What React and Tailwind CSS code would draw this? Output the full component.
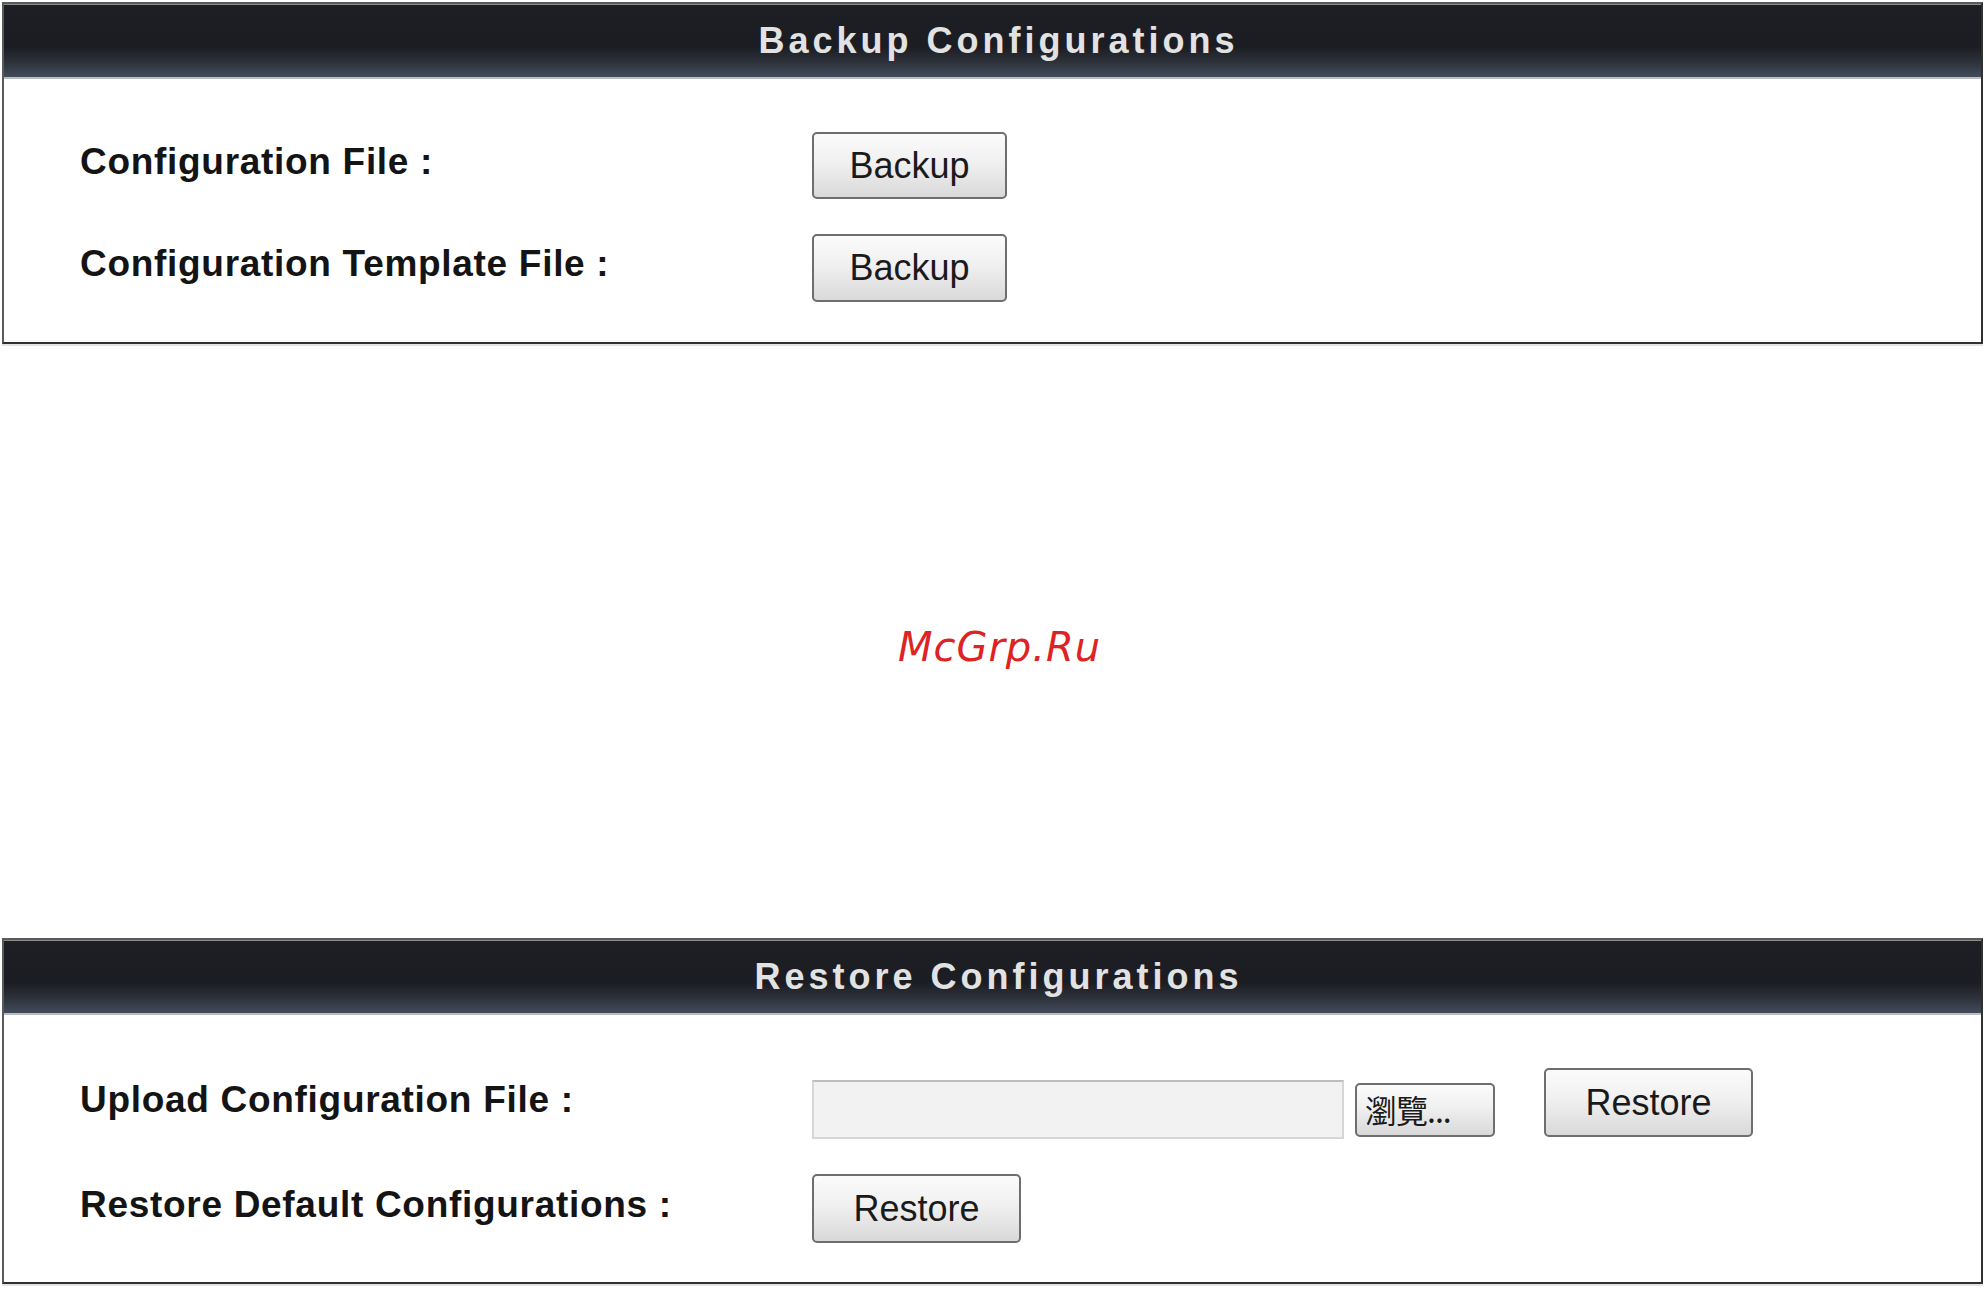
import React from 'react'

const font = { fontFamily: '"Liberation Sans", Arial, sans-serif' }

function Header({ title }) {
  return (
    <div className="h-[75px] flex items-center justify-center pl-[12px] border-t border-[#8c8c8c] border-b-2 border-b-[#b9bcc2] bg-[linear-gradient(to_bottom,#1d1f25_0%,#1b1d23_58%,#2c3038_78%,#434b5c_100%)]">
      <span className="text-[36px] font-bold tracking-[4px] text-[#e2e2e2] -mt-[1px]">{title}</span>
    </div>
  )
}

function Button({ children, className = '' }) {
  return (
    <button
      className={`border-2 border-[#6e6e6e] rounded-[5px] bg-[linear-gradient(to_bottom,#fbfbfb_0%,#f0f0f0_45%,#d9d9d9_100%)] text-[#1a1a1a] leading-none ${className}`}
      style={font}
    >
      {children}
    </button>
  )
}

function Label({ children }) {
  return (
    <div className="w-[808px] shrink-0 pl-[76px] text-[37px] font-bold tracking-[0.7px] text-[#141414] -mt-[8px]">
      {children}
    </div>
  )
}

export default function App() {
  return (
    <div className="w-[1987px] h-[1289px] bg-white pt-[2px] pl-[2px]" style={font}>
      {/* Backup */}
      <div className="w-[1981px] border-2 border-[#5a5a5a] border-r-[#303030] border-b-[#303030] shadow-[0_2px_0_#e4e4e4]">
        <Header title="Backup Configurations" />
        <div className="pt-[53px] pb-[40px] flex flex-col gap-[35px]">
          <div className="flex items-center">
            <Label>Configuration File :</Label>
            <Button className="w-[195px] h-[67px] text-[36px]">Backup</Button>
          </div>
          <div className="flex items-center">
            <Label>Configuration Template File :</Label>
            <Button className="w-[195px] h-[68px] text-[36px]">Backup</Button>
          </div>
        </div>
      </div>

      {/* Watermark */}
      <div className="h-[594px] flex items-center justify-center pl-[10px] pt-[12px]">
        <span className="text-[40px] italic tracking-[1px] text-[#dd2323]" style={{ fontFamily: '"DejaVu Sans", sans-serif' }}>
          McGrp.Ru
        </span>
      </div>

      {/* Restore */}
      <div className="w-[1981px] border-2 border-[#5a5a5a] border-r-[#303030] border-b-[#303030] shadow-[0_2px_0_#e4e4e4]">
        <Header title="Restore Configurations" />
        <div className="pt-[53px] pb-[39px] flex flex-col gap-[35px]">
          <div className="flex items-center">
            <Label>Upload Configuration File :</Label>
            <div className="flex items-end">
              <div className="w-[532px] h-[59px] bg-[#f2f2f2] border-2 border-[#d6d6d6] border-t-[#bdbdbd]" />
              <Button className="ml-[11px] mb-[2px] w-[140px] h-[54px] text-[32px] tracking-[-1px] text-left pl-[8px]">
                <span style={{ fontFamily: '"Noto Sans CJK TC", "Liberation Sans", sans-serif' }}>瀏覽...</span>
              </Button>
              <Button className="ml-[49px] mb-[2px] w-[209px] h-[69px] text-[36px]">Restore</Button>
            </div>
          </div>
          <div className="flex items-center">
            <Label>Restore Default Configurations :</Label>
            <Button className="w-[209px] h-[69px] text-[36px]">Restore</Button>
          </div>
        </div>
      </div>
    </div>
  )
}
